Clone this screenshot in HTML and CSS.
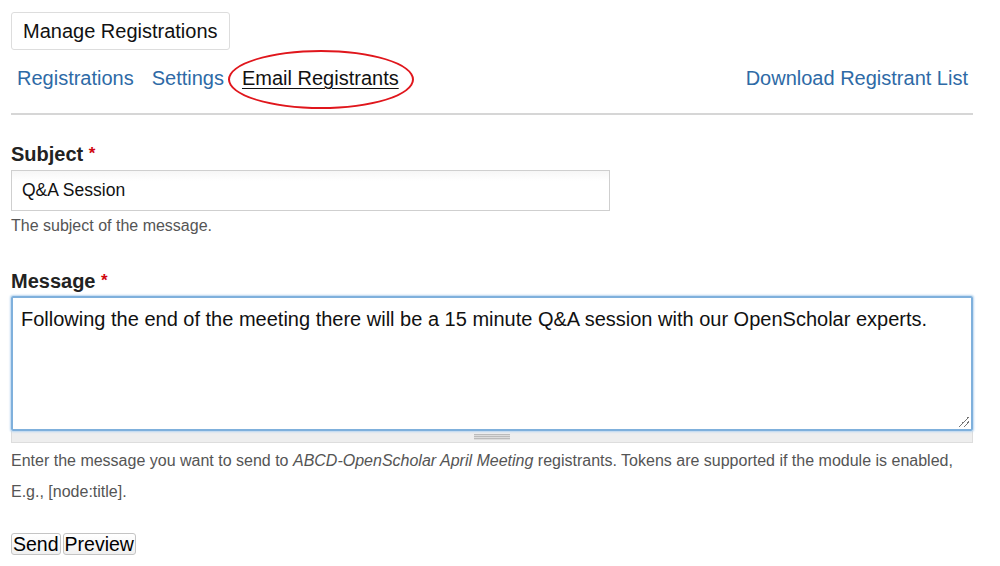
FILE: index.html
```html
<!DOCTYPE html>
<html>
<head>
<meta charset="utf-8">
<link rel="stylesheet" href="styles.css">
</head>
<body>
<div class="page">
  <div class="title-btn">Manage Registrations</div>
  <nav class="tabs">
    <div class="tabs-left">
      <a class="tab">Registrations</a>
      <a class="tab">Settings</a>
      <a class="tab active">Email Registrants<span class="circle"></span></a>
    </div>
    <a class="tab">Download Registrant List</a>
  </nav>
  <hr class="rule">
  <form class="form">
    <div class="field">
      <label class="label">Subject <span class="req">*</span></label>
      <div class="input">Q&amp;A Session</div>
      <div class="desc">The subject of the message.</div>
    </div>
    <div class="field field-msg">
      <label class="label">Message <span class="req">*</span></label>
      <div class="textarea">Following the end of the meeting there will be a 15 minute Q&amp;A session with our OpenScholar experts.<span class="resize"></span></div>
      <div class="grippie"><span class="grip"></span></div>
      <div class="desc desc-msg">Enter the message you want to send to <em>ABCD-OpenScholar April Meeting</em> registrants. Tokens are supported if the module is enabled,<br>E.g., [node:title].</div>
    </div>
    <div class="actions"><span class="btn">Send</span><span class="btn">Preview</span></div>
  </form>
</div>
</body>
</html>
```
FILE: styles.css
```css
html, body { margin: 0; padding: 0; background: #fff; }
body { font-family: "Liberation Sans", Arial, sans-serif; color: #222; }
.page { width: 962px; padding: 12px 0 0 11px; }
.title-btn {
  display: inline-block;
  box-sizing: border-box;
  height: 38px;
  padding: 0 11px;
  line-height: 36px;
  font-size: 20px;
  color: #111;
  border: 1px solid #ddd;
  border-radius: 3px;
}
.tabs { display: flex; justify-content: space-between; align-items: center; margin-top: 15px; padding: 0 5px 0 6px; }
.tabs-left { display: flex; gap: 18px; }
.tab { font-size: 20px; line-height: 26px; color: #2e6aa6; text-decoration: none; position: relative; }
.tab.active { color: #111; text-decoration: underline; text-underline-offset: 3px; text-decoration-thickness: 1px; }
.circle {
  position: absolute;
  left: -14px; top: -15px;
  width: 182px; height: 55px;
  border: 2.5px solid #e0161c;
  border-radius: 50%;
}
.rule { border: 0; border-top: 2px solid #d6d6d6; margin: 22px 0 0 0; }
.form { margin-top: 27px; }
.label { display: block; font-weight: bold; font-size: 20px; line-height: 24px; color: #222; }
.req { color: #d0080f; font-size: 17px; vertical-align: 2px; }
.input {
  box-sizing: border-box;
  width: 599px; height: 41px;
  margin-top: 4px;
  padding: 0 10px;
  line-height: 39px;
  font-size: 17.5px;
  color: #111;
  border: 1px solid #cfcfcf;
  background: linear-gradient(#f6f6f6, #fff 10px);
}
.desc { font-size: 16px; color: #555; margin-top: 6px; line-height: 18px; }
.field-msg { margin-top: 34px; }
.textarea {
  position: relative;
  box-sizing: border-box;
  width: 962px; height: 135px;
  margin-top: 3px;
  padding: 8px 8px;
  font-size: 20px;
  line-height: 26px;
  color: #111;
  border: 2px solid #7fb0dc;
  box-shadow: 0 0 2px 1px #b9d6f0;
  border-radius: 2px;
}
.resize {
  position: absolute; right: 2px; bottom: 2px;
  width: 10px; height: 10px;
  background: linear-gradient(135deg, transparent 45%, #777 45%, #777 52%, transparent 52%, transparent 70%, #777 70%, #777 77%, transparent 77%);
}
.grippie {
  box-sizing: border-box;
  width: 962px; height: 12px;
  background: #eee;
  border: 1px solid #ddd; border-top: 0;
  display: flex; justify-content: center; align-items: center;
}
.grip { width: 36px; height: 6px; background: repeating-linear-gradient(#bbb 0 1px, #ddd 1px 2px); }
.desc-msg { line-height: 31px; margin-top: 2px; }
.actions { margin-top: 26px; display: flex; gap: 2px; }
.btn {
  font-size: 19.5px; line-height: 20px; color: #000;
  border: 1px solid #c4c4c4; border-radius: 3px;
  padding: 0 1px;
  background: linear-gradient(#fff, #f0f0f0);
}
```
